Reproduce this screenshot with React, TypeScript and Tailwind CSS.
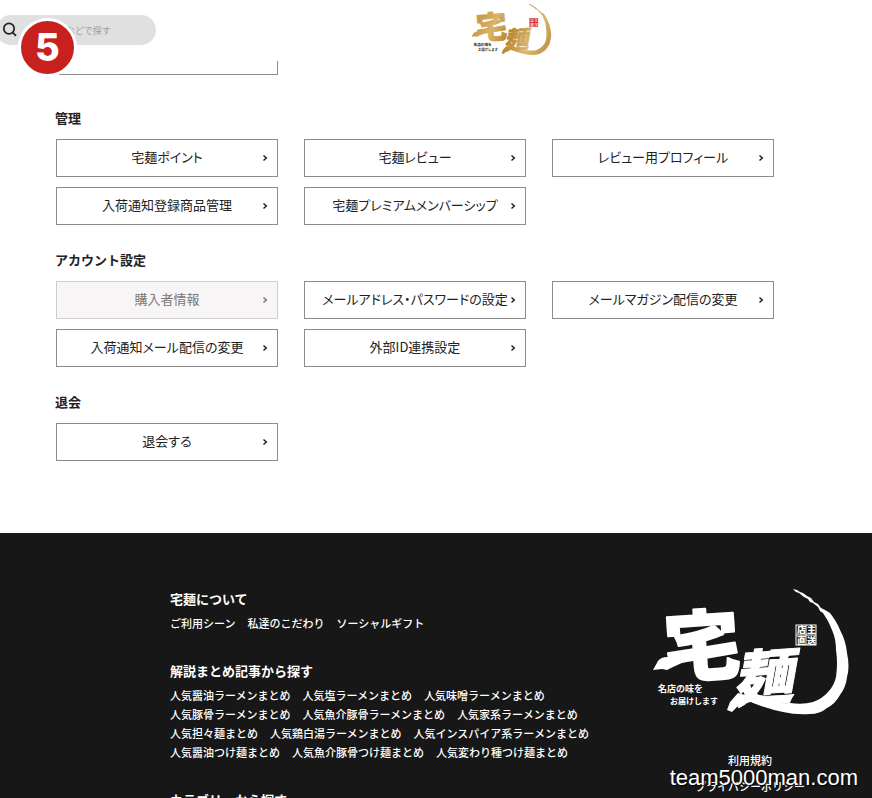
interface MenuItem {
  label: string;
  active?: boolean;
}

interface MenuSection {
  title: string;
  items: MenuItem[];
}

const menuSections: MenuSection[] = [
  {
    title: "管理",
    items: [
      { label: "宅麺ポイント" },
      { label: "宅麺レビュー" },
      { label: "レビュー用プロフィール" },
      { label: "入荷通知登録商品管理" },
      { label: "宅麺プレミアムメンバーシップ" },
    ],
  },
  {
    title: "アカウント設定",
    items: [
      { label: "購入者情報", active: true },
      { label: "メールアドレス・パスワードの設定" },
      { label: "メールマガジン配信の変更" },
      { label: "入荷通知メール配信の変更" },
      { label: "外部ID連携設定" },
    ],
  },
  {
    title: "退会",
    items: [{ label: "退会する" }],
  },
];

const footerGroups = [
  {
    title: "宅麺について",
    links: ["ご利用シーン", "私達のこだわり", "ソーシャルギフト"],
  },
  {
    title: "解説まとめ記事から探す",
    links: [
      "人気醤油ラーメンまとめ",
      "人気塩ラーメンまとめ",
      "人気味噌ラーメンまとめ",
      "人気豚骨ラーメンまとめ",
      "人気魚介豚骨ラーメンまとめ",
      "人気家系ラーメンまとめ",
      "人気担々麺まとめ",
      "人気鶏白湯ラーメンまとめ",
      "人気インスパイア系ラーメンまとめ",
      "人気醤油つけ麺まとめ",
      "人気魚介豚骨つけ麺まとめ",
      "人気変わり種つけ麺まとめ",
    ],
  },
  { title: "カテゴリーから探す", links: [] },
];

interface LogoProps {
  className: string;
  ink: string;
  tagline: string;
  seal: string;
  sealText: string;
}

function Logo({ className, ink, tagline, seal, sealText }: LogoProps) {
  return (
    <svg className={className} viewBox="0 0 200 130" role="img" aria-label="宅麺">
      <defs>
        <linearGradient id="gold" gradientUnits="userSpaceOnUse" x1="0" y1="20" x2="200" y2="120">
          <stop offset="0" stopColor="#b98a35" />
          <stop offset="0.3" stopColor="#d9b468" />
          <stop offset="0.5" stopColor="#b8862f" />
          <stop offset="0.75" stopColor="#dcb873" />
          <stop offset="1" stopColor="#b88a38" />
        </linearGradient>
      </defs>
      {/* Brush ring */}
      <path
        fill={ink}
        d="M143 2 L147 3 L150 5 L153 6 L157 9 L161 11 L164 15 L168 17 L171 21 L175 23 L180 26 Q187 35 190 43 Q196 54 197 66 Q200 80 197 90 Q196 100 190 108 Q185 117 177 121 Q170 127 160 127 Q146 128 133 125 Q117 122 101 115 L90 117 L82 125 L77 123 L80 115 L88 106 L106 111 Q112 113 118 115 Q129 117 140 116 Q153 118 163 115 Q172 112 178 105 Q184 99 186 90 Q188 76 186 63 Q186 52 182 43 L178 34 L173 26 L170 24 L168 20 L163 16 L160 15 L158 12 L154 10 L149 6 L146 5 Z"
      />
      <path
        fill={ink}
        d="M3 83 L8 74 Q11 70 17 70 L26 71 Q40 67 52 61 L50 68 Q36 74 23 80 L17 83 L12 82 Z"
      />
      <g fill={ink} stroke={ink} strokeLinejoin="round" fontWeight="900">
        <text x="14" y="87" fontSize="76" strokeWidth="2" transform="rotate(-4 50 60)">
          宅
        </text>
        <text x="82" y="113" fontSize="60" strokeWidth="1" fontStyle="italic" transform="rotate(-4 110 90)">
          麺
        </text>
      </g>
      {/* Seal */}
      <rect x="146" y="38" width="20" height="20" fill={seal} stroke={seal === "none" ? sealText : seal} />
      <path d="M156 38 V58 M146 48 H166" stroke={sealText} strokeWidth={seal === "none" ? 1 : 0} />
      <g fill={sealText} fontSize="9" fontWeight={seal === "none" ? 900 : 500}>
        <text x="147" y="46">店</text>
        <text x="157" y="46">主</text>
        <text x="147" y="57">直</text>
        <text x="157" y="57">送</text>
      </g>
      <g fill={tagline} fontWeight="700">
        <text x="8" y="105" fontSize="9">名店の味を</text>
        <text x="20" y="117" fontSize="8">お届けします</text>
      </g>
    </svg>
  );
}

function MenuLink({ label, active }: MenuItem) {
  return (
    <a
      href="#"
      className={
        active
          ? "relative flex h-[38px] items-center justify-center border border-[#cfcdce] bg-[#f7f5f6] pb-[3px] text-[13px] whitespace-nowrap text-[#777]"
          : "relative flex h-[38px] items-center justify-center border border-[#8c8c8c] bg-white pb-[3px] text-[13px] whitespace-nowrap text-[#222]"
      }
    >
      {label}
      <svg
        className="absolute top-3.5 right-[9px] h-2 w-1.5"
        viewBox="0 0 6 8"
        fill="none"
        stroke="currentColor"
        strokeWidth="1.5"
        aria-hidden="true"
      >
        <path d="M1.5 1.5 L4.3 4 L1.5 6.5" />
      </svg>
    </a>
  );
}

function Header() {
  return (
    <header className="relative z-10 flex h-[61px] items-start bg-white">
      <label className="mt-[15px] -ml-1 flex h-[30px] w-40 shrink-0 items-center rounded-full bg-[#e0e0e0] pl-1.5">
        <svg
          className="size-4 shrink-0"
          viewBox="0 0 16 16"
          fill="none"
          stroke="#222"
          strokeWidth="1.7"
          aria-hidden="true"
        >
          <circle cx="7" cy="6.6" r="5.2" />
          <path d="M10.6 10.4 L14 13.8" />
        </svg>
        <input
          type="search"
          aria-label="商品を検索"
          placeholder="などで探す"
          className="ml-12 w-20 min-w-0 bg-transparent pt-0.5 text-[9px] outline-none placeholder:text-[#999ba5]"
        />
      </label>
      <a href="#" className="mt-[3px] ml-[314px] shrink-0">
        <Logo className="h-[53px] w-[82px]" ink="url(#gold)" tagline="#222" seal="#d8232a" sealText="#fff" />
      </a>
      <span className="absolute top-[18px] left-[18px] flex size-[59px] items-center justify-center rounded-full border-3 border-white bg-[#c8201f] font-[Inter] text-[38px] font-extrabold text-white">
        5
      </span>
    </header>
  );
}

function Footer() {
  return (
    <footer className="mt-[72px] flex justify-between bg-[#171717] pr-[22px] pl-[170px] text-white">
      <div className="max-w-[430px] pt-14">
        {footerGroups.map((group) => (
          <section key={group.title} className="mb-7">
            <h2 className="text-[13px] leading-5 font-bold">{group.title}</h2>
            <ul className="mt-[5px] flex flex-wrap gap-x-3 text-[11px] leading-[19px] font-medium">
              {group.links.map((link) => (
                <li key={link}>
                  <a href="#">{link}</a>
                </li>
              ))}
            </ul>
          </section>
        ))}
      </div>
      <div className="flex w-[200px] shrink-0 flex-col items-center pt-[54px]">
        <Logo className="h-[130px] w-[200px]" ink="#fff" tagline="#fff" seal="none" sealText="#fff" />
        <ul className="mt-[34px] flex flex-col gap-[7px] text-center text-[11px] leading-[19px] font-medium">
          <li>
            <a href="#">利用規約</a>
          </li>
          <li>
            <a href="#">プライバシーポリシー</a>
          </li>
        </ul>
      </div>
    </footer>
  );
}

function App() {
  return (
    <div className="relative h-screen overflow-hidden bg-white font-['Noto_Sans_CJK_JP',sans-serif]">
      <Header />
      <main className="-mt-6 px-14">
        <div className="max-w-[718px]">
          <div className="mb-2 grid grid-cols-3 gap-x-[26px]">
            <div className="h-[38px] border border-[#8c8c8c]" />
          </div>
          {menuSections.map((section) => (
            <section key={section.title} className="pt-[25px]">
              <h2 className="-ml-px mb-[11px] text-[13px] leading-5 font-bold text-[#222]">{section.title}</h2>
              <nav
                aria-label={section.title}
                className="grid grid-cols-3 gap-x-[26px] gap-y-2.5 [font-feature-settings:'palt']"
              >
                {section.items.map((item) => (
                  <MenuLink key={item.label} {...item} />
                ))}
              </nav>
            </section>
          ))}
        </div>
      </main>
      <Footer />
      <p className="absolute right-3.5 bottom-1.5 font-['Liberation_Sans',sans-serif] text-[22px] leading-7 text-white [text-shadow:1px_1px_1px_#000]">
        team5000man.com
      </p>
    </div>
  );
}

export default App;
